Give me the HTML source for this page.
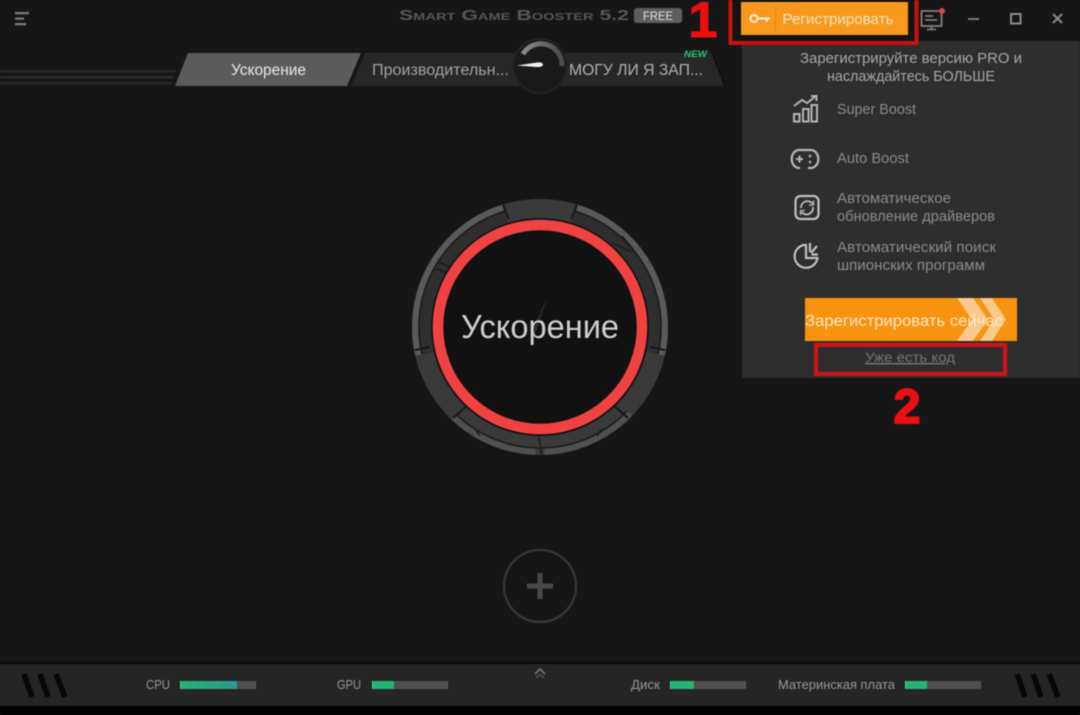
<!DOCTYPE html>
<html lang="ru"><head><meta charset="utf-8"><title>Smart Game Booster</title>
<style>
html,body{margin:0;padding:0;background:#161616;width:1080px;height:715px;overflow:hidden}
svg{display:block;filter:blur(.5px)}
text{font-family:"Liberation Sans","DejaVu Sans",sans-serif}
</style></head><body>
<svg width="1080" height="715" viewBox="0 0 1080 715" xmlns="http://www.w3.org/2000/svg">
<defs>
<linearGradient id="g1" x1="0" y1="0" x2="1" y2="0"><stop offset="0" stop-color="#25dc8c"/><stop offset="1" stop-color="#2fb6ae"/></linearGradient>
<linearGradient id="ga" x1="0" y1="0" x2="1" y2="0"><stop offset="0" stop-color="#8a8a8a"/><stop offset="1" stop-color="#4a4a4a"/></linearGradient>
<g id="t" fill="#252525" fill-opacity=".6"><path d="M1.500 0h.7v8h-.7zM3.500 0h.7v8h-.7zM5.500 0h.7v8h-.7zM7.500 0h.7v8h-.7zM9.500 0h.7v8h-.7zM11.500 0h.7v8h-.7zM13.500 0h.7v8h-.7zM15.500 0h.7v8h-.7zM17.500 0h.7v8h-.7zM19.500 0h.7v8h-.7zM21.500 0h.7v8h-.7zM23.500 0h.7v8h-.7zM25.500 0h.7v8h-.7zM27.500 0h.7v8h-.7zM29.500 0h.7v8h-.7zM31.500 0h.7v8h-.7zM33.500 0h.7v8h-.7zM35.500 0h.7v8h-.7zM37.500 0h.7v8h-.7zM39.500 0h.7v8h-.7zM41.500 0h.7v8h-.7zM43.500 0h.7v8h-.7zM45.500 0h.7v8h-.7zM47.500 0h.7v8h-.7zM49.500 0h.7v8h-.7zM51.500 0h.7v8h-.7zM53.500 0h.7v8h-.7zM55.500 0h.7v8h-.7zM57.500 0h.7v8h-.7zM59.500 0h.7v8h-.7zM61.500 0h.7v8h-.7zM63.500 0h.7v8h-.7zM65.500 0h.7v8h-.7zM67.500 0h.7v8h-.7zM69.500 0h.7v8h-.7zM71.500 0h.7v8h-.7zM73.500 0h.7v8h-.7z"/></g>
</defs>
<rect width="1080" height="715" fill="#161616"/>

<!-- menu icon -->
<g fill="#7b7b7b"><path d="M15 12h14v2.200H15zM15 17.500h9v2.200h-9zM15 23h11v2.200H15z"/></g>

<!-- title -->
<text x="399" y="20" font-size="14.500" font-weight="700" fill="#565656" textLength="230" lengthAdjust="spacingAndGlyphs" style="font-variant:small-caps">Smart Game Booster 5.2</text>
<rect x="634" y="8" width="48" height="15" rx="3" fill="#5e5e5e"/>
<text x="658" y="20" font-size="11.500" fill="#e0e0e0" text-anchor="middle" textLength="30" lengthAdjust="spacingAndGlyphs">FREE</text>

<!-- tab decorative lines -->
<g fill="#2a2a2a"><rect x="0" y="70" width="176" height="2.500"/><rect x="0" y="76" width="174" height="2.500"/><rect x="0" y="82" width="172" height="2.500"/></g>
<!-- tabs -->
<path d="M188 53H361L347 86H175Z" fill="#5b5b5b"/>
<text x="268.500" y="75" font-size="15.500" fill="#e8e8e8" text-anchor="middle" textLength="75" lengthAdjust="spacingAndGlyphs">Ускорение</text>
<path d="M365 53H520V86H351Z" fill="#272727"/>
<text x="372" y="75" font-size="15.500" fill="#a2a2a2" textLength="137" lengthAdjust="spacingAndGlyphs">Производительн...</text>
<path d="M560 53H712L725 86H560Z" fill="#272727"/>
<path d="M712 53L725 86" stroke="#0e0e0e" stroke-width="1.500"/>
<text x="569" y="75" font-size="15.500" fill="#b0b0b0" textLength="134" lengthAdjust="spacingAndGlyphs">МОГУ ЛИ Я ЗАП...</text>
<text x="684" y="57" font-size="9" font-weight="700" font-style="italic" fill="#26c56f" textLength="23" lengthAdjust="spacingAndGlyphs">NEW</text>

<!-- gauge -->
<circle cx="540" cy="66" r="27" fill="#1a1a1a" stroke="#242424" stroke-width="2"/>
<path d="M523 54A21 21 0 0 1 562 66" fill="none" stroke="url(#ga)" stroke-width="5"/>
<path d="M517 65.500L537 62.500C545 61.500 545 67.500 537 67Z" fill="#f2f2f2"/>

<!-- register button -->
<rect x="730.500" y="-3" width="186" height="46" fill="#131313"/>
<rect x="741" y="2" width="167" height="33" fill="#f8981d"/>
<rect x="775" y="6" width="1" height="25" fill="#e58512"/>
<circle cx="754" cy="18.500" r="3.500" fill="none" stroke="#fff3dc" stroke-width="2"/>
<path d="M758 17.500h12v2h-2v2h-2.500v-2H758z" fill="#fff3dc"/>
<text x="838" y="24" font-size="15" fill="#fde6c4" text-anchor="middle" textLength="111" lengthAdjust="spacingAndGlyphs">Регистрировать</text>

<!-- monitor icon -->
<g fill="none" stroke="#7e7e7e" stroke-width="1.800"><rect x="921.500" y="11" width="20" height="15"/><path d="M925 16h8M925 20h12M927 29.500h9M931.500 26v3"/></g>
<circle cx="942" cy="11" r="3" fill="#e2413e"/>
<!-- window controls -->
<rect x="968" y="18" width="11" height="2" fill="#7a7a7a"/>
<rect x="1011" y="14" width="9.500" height="9.500" fill="none" stroke="#8a8a8a" stroke-width="2"/>
<path d="M1053 14L1062 23M1062 14L1053 23" stroke="#8a8a8a" stroke-width="2"/>

<!-- dropdown panel -->
<rect x="742" y="41" width="338" height="337" fill="#2e2e2e"/>
<rect x="730.500" y="-3" width="186" height="46" fill="none" stroke="#c90f14" stroke-width="4"/>
<text x="911" y="63" font-size="14.800" fill="#a6a6a6" text-anchor="middle" textLength="222" lengthAdjust="spacingAndGlyphs">Зарегистрируйте версию PRO и</text>
<text x="911" y="81" font-size="14.800" fill="#a6a6a6" text-anchor="middle" textLength="168" lengthAdjust="spacingAndGlyphs">наслаждайтесь БОЛЬШЕ</text>

<!-- icon: super boost -->
<g fill="none" stroke="#b4b4b4" stroke-width="2">
<rect x="794" y="114" width="5.500" height="7.500"/><rect x="803" y="109" width="5.500" height="12.500"/><rect x="811.500" y="105" width="5.500" height="16.500"/>
<path d="M794 106L802 100L807 103L816 96M811 96h5.500v5"/>
</g>
<text x="837" y="114" font-size="14.500" fill="#8a8a8a" textLength="79" lengthAdjust="spacingAndGlyphs">Super Boost</text>

<!-- icon: auto boost -->
<path d="M800 168H799A6.500 8 0 0 1 799 150H811A6.500 8 0 0 1 811 168H808" fill="none" stroke="#b8b8b8" stroke-width="2.200"/>
<path d="M796 159h7M799.500 155.500v7" stroke="#b8b8b8" stroke-width="2"/>
<circle cx="810" cy="156" r="1.300" fill="#b8b8b8"/><circle cx="810" cy="162" r="1.300" fill="#b8b8b8"/>
<text x="837" y="163" font-size="14.500" fill="#8a8a8a" textLength="72" lengthAdjust="spacingAndGlyphs">Auto Boost</text>

<!-- icon: update -->
<rect x="795.500" y="196" width="23" height="23" rx="5" fill="none" stroke="#c0c0c0" stroke-width="2.200"/>
<path d="M801 208A6.500 6.500 0 0 1 812.500 203.500M813 207A6.500 6.500 0 0 1 801.500 212" fill="none" stroke="#c0c0c0" stroke-width="1.800"/>
<path d="M813.500 200.500v4.500h-4.500M800.500 215v-4.500h4.500" fill="none" stroke="#c0c0c0" stroke-width="1.300"/>
<text x="837" y="203" font-size="14.500" fill="#8a8a8a" textLength="114" lengthAdjust="spacingAndGlyphs">Автоматическое</text>
<text x="837" y="221" font-size="14.500" fill="#8a8a8a" textLength="158" lengthAdjust="spacingAndGlyphs">обновление драйверов</text>

<!-- icon: spy -->
<path d="M804 245A11.500 11.500 0 1 0 817.500 258H806V245Z" fill="none" stroke="#c0c0c0" stroke-width="2.200" stroke-linejoin="round"/>
<path d="M810 243V252M811 253L817 246M811.500 254.500H818" stroke="#c0c0c0" stroke-width="2.200"/>
<text x="837" y="252" font-size="14.500" fill="#8a8a8a" textLength="159" lengthAdjust="spacingAndGlyphs">Автоматический поиск</text>
<text x="837" y="270" font-size="14.500" fill="#8a8a8a" textLength="148" lengthAdjust="spacingAndGlyphs">шпионских программ</text>

<!-- orange CTA -->
<rect x="805" y="298" width="212" height="43" fill="#f8930f"/>
<path d="M957 298H973L988 319.500L973 341H957L972 319.500Z" fill="#fbc98b"/>
<path d="M980 298H992L1006 319.500L992 341H980L994 319.500Z" fill="#fbc98b"/>
<text x="904" y="326" font-size="15.500" fill="#fde9cc" text-anchor="middle" textLength="198" lengthAdjust="spacingAndGlyphs">Зарегистрировать сейчас</text>

<!-- have code -->
<rect x="816" y="345" width="189" height="29" fill="none" stroke="#d1141a" stroke-width="4"/>
<text x="910" y="362" font-size="14" fill="#767676" text-anchor="middle" text-decoration="underline" textLength="90" lengthAdjust="spacingAndGlyphs">Уже есть код</text>

<!-- big digits -->
<text transform="translate(703 37) scale(1.050 1)" font-size="50" font-weight="700" fill="#ec0f11" text-anchor="middle" stroke="#ec0f11" stroke-width="1">1</text>
<text x="907" y="423" font-size="48" font-weight="700" fill="#ec0f11" text-anchor="middle" stroke="#ec0f11" stroke-width="2">2</text>

<!-- main ring -->
<circle cx="540" cy="327" r="128" fill="#3a3a3a"/>
<!-- dark band under the arcs -->
<g fill="none" pathLength="360">
<circle cx="540" cy="327" r="115" stroke="#2e2e2e" stroke-width="11" pathLength="360" stroke-dasharray="86 274" transform="rotate(-73 540 327)"/>
<circle cx="540" cy="327" r="115" stroke="#2e2e2e" stroke-width="11" pathLength="360" stroke-dasharray="86 274" transform="rotate(167 540 327)"/>
<circle cx="540" cy="327" r="121" stroke="#1c1c1c" stroke-width="1.500" pathLength="360" stroke-dasharray="86 274" transform="rotate(-73 540 327)"/>
<circle cx="540" cy="327" r="121" stroke="#1c1c1c" stroke-width="1.500" pathLength="360" stroke-dasharray="86 274" transform="rotate(167 540 327)"/>
<circle cx="540" cy="327" r="121" stroke="#1c1c1c" stroke-width="1.500" pathLength="360" stroke-dasharray="90 270" transform="rotate(44 540 327)"/>
<!-- light outer arcs -->
<circle cx="540" cy="327" r="125" stroke="#5a5a5a" stroke-width="6" pathLength="360" stroke-dasharray="86 274" transform="rotate(-73 540 327)"/>
<circle cx="540" cy="327" r="125" stroke="#5a5a5a" stroke-width="6" pathLength="360" stroke-dasharray="86 274" transform="rotate(167 540 327)"/>
<circle cx="540" cy="327" r="125" stroke="#505050" stroke-width="6" pathLength="360" stroke-dasharray="44 316" transform="rotate(44 540 327)"/>
<circle cx="540" cy="327" r="125" stroke="#505050" stroke-width="6" pathLength="360" stroke-dasharray="42 318" transform="rotate(92 540 327)"/>
</g>
<!-- plate notches -->
<g fill="none" stroke="#1a1a1a" stroke-width="1.500">
<path d="M622 236L633 249M627 232L639 244M612 243L632 252M438 262L450 267M436 269L448 273M475 429L480 436M602 429L597 436M539 437L542 457"/>
</g>
<g fill="none" stroke="#161616" stroke-width="2">
<path d="M503 205L509 219M577 205L571 219M415 350L430 347M665 350L650 347M453 418L468 405M628 418L613 405"/>
</g>
<circle cx="540" cy="327" r="109" fill="#111"/>
<circle cx="540" cy="327" r="102" fill="#111" stroke="#f14242" stroke-width="10.500"/>
<path d="M547 298L527 360L534 335L533 328Z" fill="#2b2b2b"/>
<text x="540" y="338" font-size="33" fill="#cfcfcf" text-anchor="middle" textLength="158" lengthAdjust="spacingAndGlyphs">Ускорение</text>

<!-- plus -->
<circle cx="540" cy="586" r="36" fill="none" stroke="#383838" stroke-width="2.200"/>
<path d="M527 583.500h26v5h-26zM537.500 573h5v26h-5z" fill="#484848"/>

<!-- footer -->
<rect x="0" y="662" width="1080" height="2.500" fill="#050505"/>
<rect x="0" y="664" width="1080" height="42" fill="#252525"/>
<rect x="0" y="706" width="1080" height="9" fill="#000"/>
<path d="M535 674L540 669L545 674" fill="none" stroke="#6d6d6d" stroke-width="2"/>
<path d="M536 678L540 674.500L544 678" fill="none" stroke="#555" stroke-width="1.500"/>

<g stroke="#070707" stroke-width="5.500">
<path d="M24 674L32 697M40 674L48 697M56 674L65 697"/>
<path d="M1017 674L1025 697M1033 674L1041 697M1049 674L1058 697"/>
</g>

<g font-size="12.500" fill="#979797">
<text x="146" y="689" textLength="24" lengthAdjust="spacingAndGlyphs">CPU</text>
<text x="337" y="689" textLength="24" lengthAdjust="spacingAndGlyphs">GPU</text>
<text x="631" y="689" textLength="29" lengthAdjust="spacingAndGlyphs">Диск</text>
<text x="778" y="689" textLength="117" lengthAdjust="spacingAndGlyphs">Материнская плата</text>
</g>

<!-- meters -->
<g transform="translate(180 681)"><rect width="76" height="8" fill="#5b5b5b"/><rect width="57" height="8" fill="url(#g1)"/><use href="#t"/></g>
<g transform="translate(372 681)"><rect width="76" height="8" fill="#5b5b5b"/><rect width="22" height="8" fill="#25dc8c"/><use href="#t"/></g>
<g transform="translate(670 681)"><rect width="76" height="8" fill="#5b5b5b"/><rect width="24" height="8" fill="#25dc8c"/><use href="#t"/></g>
<g transform="translate(905 681)"><rect width="76" height="8" fill="#5b5b5b"/><rect width="22" height="8" fill="#25dc8c"/><use href="#t"/></g>
</svg>
</body></html>
